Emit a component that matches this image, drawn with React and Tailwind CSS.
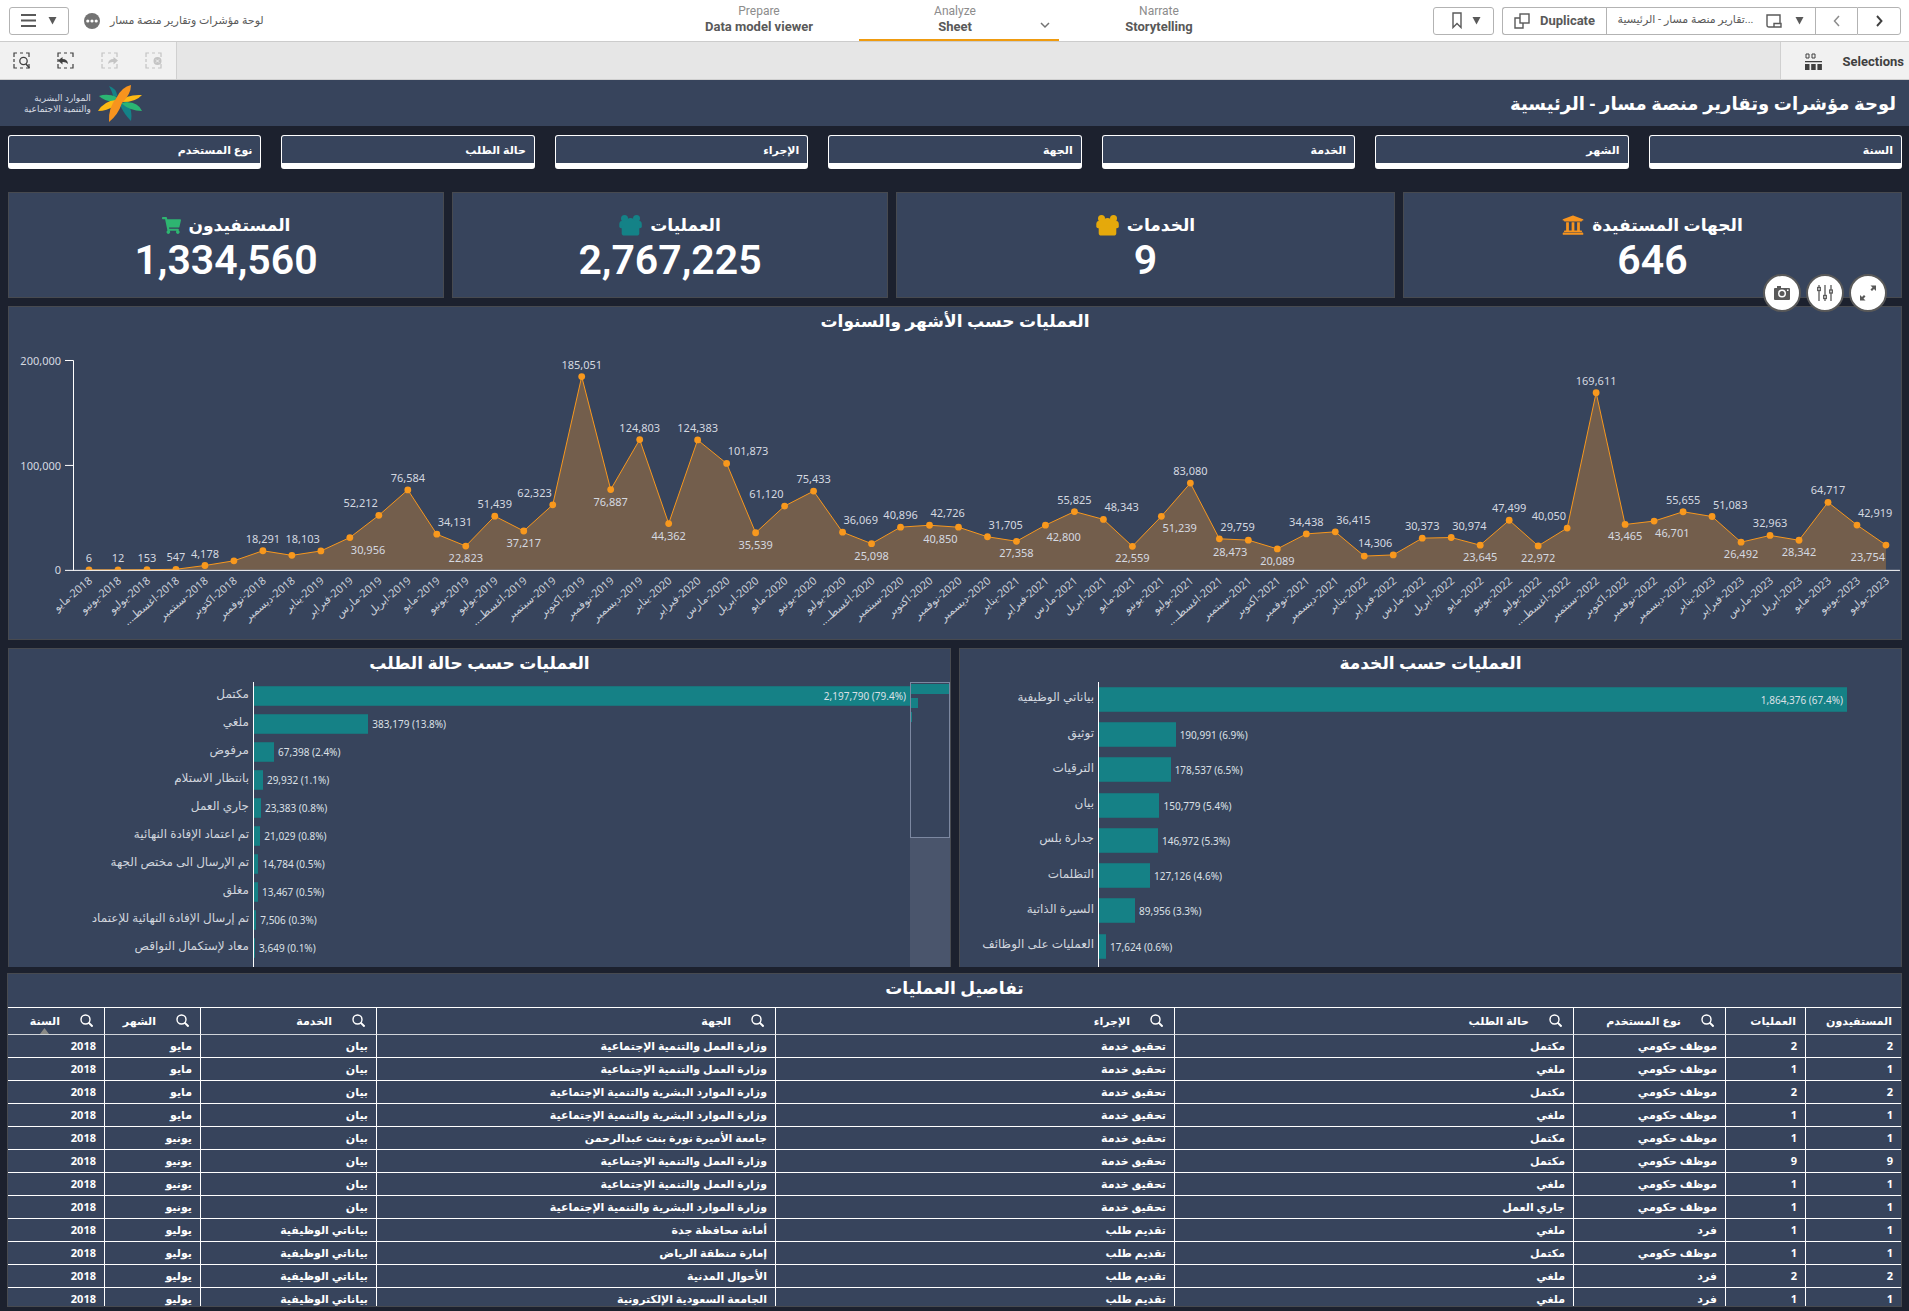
import React from "react";
import {
  FaShoppingCart,
  FaUniversity,
} from "react-icons/fa";

const FILTERS = ["نوع المستخدم", "حالة الطلب", "الإجراء", "الجهة", "الخدمة", "الشهر", "السنة"];

const MONTHS = ["يناير", "فبراير", "مارس", "ابريل", "مايو", "يونيو", "يوليو", "اغسطـ...", "سبتمبر", "اكتوبر", "نوفمبر", "ديسمبر"];

// [value, label placement]: a/b = above/below, l/r = left/right of the point, "" = no label
const SERIES = [
  [6, "a"], [12, "a"], [153, "a"], [547, "a"], [4178, "a"], [8700, ""], [18291, "a"], [13900, ""],
  [18103, "al"], [30956, "br"], [52212, "al"], [76584, "a"], [34131, "ar"], [22823, "b"], [51439, "a"], [37217, "b"], [62323, "al"], [185051, "a"], [76887, "b"], [124803, "a"],
  [44362, "b"], [124383, "a"], [101873, "ar"], [35539, "b"], [61120, "al"], [75433, "a"], [36069, "ar"], [25098, "b"], [40896, "a"], [42726, "ar"], [40850, "bl"], [31705, "ar"],
  [27358, "b"], [42800, "br"], [55825, "a"], [48343, "ar"], [22559, "b"], [51239, "br"], [83080, "a"], [29759, "ar"], [28473, "bl"], [20089, "b"], [34438, "a"], [36415, "ar"],
  [13200, ""], [14306, "al"], [30373, "a"], [30974, "ar"], [23645, "b"], [47499, "a"], [22972, "b"], [40050, "al"], [169611, "a"], [43465, "b"], [46701, "br"], [55655, "a"],
  [51083, "ar"], [26492, "b"], [32963, "a"], [28342, "b"], [64717, "a"], [42919, "ar"], [23754, "bl"],
];

const STATUS = [
  ["مكتمل", 2197790, "79.4%"],
  ["ملغي", 383179, "13.8%"],
  ["مرفوض", 67398, "2.4%"],
  ["بانتظار الاستلام", 29932, "1.1%"],
  ["جاري العمل", 23383, "0.8%"],
  ["تم اعتماد الإفادة النهائية", 21029, "0.8%"],
  ["تم الإرسال الى مختص الجهة", 14784, "0.5%"],
  ["مغلق", 13467, "0.5%"],
  ["تم إرسال الإفادة النهائية للإعتماد", 7506, "0.3%"],
  ["معاد لإستكمال النواقص", 3649, "0.1%"],
];

const SERVICES = [
  ["بياناتي الوظيفية", 1864376, "67.4%"],
  ["توثيق", 190991, "6.9%"],
  ["الترقيات", 178537, "6.5%"],
  ["بيان", 150779, "5.4%"],
  ["جدارة بلس", 146972, "5.3%"],
  ["التظلمات", 127126, "4.6%"],
  ["السيرة الذاتية", 89956, "3.3%"],
  ["العمليات على الوظائف", 17624, "0.6%"],
];

const COLUMNS = [
  ["السنة", true, 97], ["الشهر", true, 96], ["الخدمة", true, 176], ["الجهة", true, 399], ["الإجراء", true, 399],
  ["حالة الطلب", true, 399], ["نوع المستخدم", true, 152], ["العمليات", false, 80], ["المستفيدون", false, 95],
];
const COLUMN_TOTAL = COLUMNS.reduce((sum, c) => sum + c[2], 0);

const LABOR = "وزارة العمل والتنمية الإجتماعية";
const HR = "وزارة الموارد البشرية والتنمية الإجتماعية";
const GOV = "موظف حكومي";
const RUN = "تحقيق خدمة";
const ASK = "تقديم طلب";
const MY = "بياناتي الوظيفية";
const ROWS = [
  ["2018", "مايو", "بيان", LABOR, RUN, "مكتمل", GOV, "2", "2"],
  ["2018", "مايو", "بيان", LABOR, RUN, "ملغي", GOV, "1", "1"],
  ["2018", "مايو", "بيان", HR, RUN, "مكتمل", GOV, "2", "2"],
  ["2018", "مايو", "بيان", HR, RUN, "ملغي", GOV, "1", "1"],
  ["2018", "يونيو", "بيان", "جامعة الأميرة نورة بنت عبدالرحمن", RUN, "مكتمل", GOV, "1", "1"],
  ["2018", "يونيو", "بيان", LABOR, RUN, "مكتمل", GOV, "9", "9"],
  ["2018", "يونيو", "بيان", LABOR, RUN, "ملغي", GOV, "1", "1"],
  ["2018", "يونيو", "بيان", HR, RUN, "جاري العمل", GOV, "1", "1"],
  ["2018", "يوليو", MY, "أمانة محافظة جدة", ASK, "ملغي", "فرد", "1", "1"],
  ["2018", "يوليو", MY, "إمارة منطقة الرياض", ASK, "مكتمل", GOV, "1", "1"],
  ["2018", "يوليو", MY, "الأحوال المدنية", ASK, "ملغي", "فرد", "2", "2"],
  ["2018", "يوليو", MY, "الجامعة السعودية الإلكترونية", ASK, "ملغي", "فرد", "1", "1"],
];

const PANEL = "border border-[#474a50] bg-[#37445c]";

function Caret() {
  return (
    <svg width="9" height="8" viewBox="0 0 9 8" aria-hidden="true">
      <path d="M0.500 0h8L4.500 7.500z" fill="#595959" />
    </svg>
  );
}

function GroupIcon({ className }) {
  return (
    <svg className={className} width="23" height="21" viewBox="0 0 23 21" fill="currentColor" aria-hidden="true">
      <circle cx="5.500" cy="3.500" r="3.500" />
      <circle cx="17.500" cy="3.500" r="3.500" />
      <circle cx="11.500" cy="7.500" r="4.600" />
      <path d="M2.500 6h18q2.300.3 2.300 3.500v2q0 1.800-2 1.800h-18.500q-2 0-2-1.800v-2q0-3.200 2.200-3.500z" />
      <path d="M3.500 10.500h16q.8 1 .8 3v4.500q0 2.600-2.600 2.600h-12.400q-2.600 0-2.600-2.600v-4.500q0-2 .8-3z" />
    </svg>
  );
}

function SelectionIcon({ kind, label, muted }) {
  const color = muted ? "text-[#c4c4c4]" : "text-[#404040]";
  return (
    <button type="button" aria-label={label} disabled={muted} className={`flex h-full w-11 items-center justify-center pr-[2px] ${color}`}>
      <svg width="17" height="17" viewBox="0 0 17 17" fill="none" stroke="currentColor">
        <path d="M1 5V1h3M7 1h3M13 1h3v4M1 7v3M1 12v4h3M7 16h3M13 16h3v-4" strokeWidth="1.200" />
        {kind === "search" && (
          <g>
            <circle cx="10.500" cy="9" r="3.700" strokeWidth="1.300" fill="#f1f1f1" />
            <path d="M13 12l3.500 4" strokeWidth="1.500" />
          </g>
        )}
        {kind === "back" && <path d="M1 8.500l4.500-3.500v2q5 0 5.500 5-2-2.200-5.500-2v2.500z" fill="currentColor" stroke="none" />}
        {kind === "forward" && <path d="M17 8.500l-4.500-3.500v2q-5 0-5.500 5 2-2.200 5.500-2v2.500z" fill="currentColor" stroke="none" />}
        {kind === "clear" && (
          <g>
            <circle cx="12.500" cy="9" r="4" fill="currentColor" stroke="none" />
            <path d="M11 7.500l3 3M14 7.500l-3 3" stroke="#f1f1f1" />
          </g>
        )}
      </svg>
    </button>
  );
}

function Toolbar() {
  const box = "flex h-7 items-center justify-center border border-[#b3b3b3] bg-white";
  return (
    <header className="grid h-[42px] grid-cols-[1fr_auto_1fr] items-center border-b border-[#ccc] bg-white pr-2 pl-[9px] text-xs text-[#595959]">
      <div className="flex items-center">
        <button type="button" aria-label="Navigation" className={`${box} w-[60px] gap-3 rounded-[3px]`}>
          <svg width="15" height="13" viewBox="0 0 15 13" aria-hidden="true">
            <path d="M0 1h15M0 6.500h15M0 12h15" stroke="#595959" strokeWidth="2" />
          </svg>
          <Caret />
        </button>
        <button type="button" aria-label="More" className="ml-[15px]">
          <svg width="16" height="16" viewBox="0 0 16 16">
            <circle cx="8" cy="8" r="8" fill="#737373" />
            <circle cx="3.800" cy="8" r="1.600" fill="#fff" />
            <circle cx="8" cy="8" r="1.600" fill="#fff" />
            <circle cx="12.200" cy="8" r="1.600" fill="#fff" />
          </svg>
        </button>
        <h1 dir="rtl" className="ml-[10px] text-[11px] leading-4 whitespace-nowrap">لوحة مؤشرات وتقارير منصة مسار</h1>
      </div>

      <nav className="flex h-[41px] pl-2 text-center leading-4">
        <a href="#prepare" className="w-[200px] pt-[3px]">
          <span className="block text-[#8c8c8c]">Prepare</span>
          <span className="block text-[13px] font-bold">Data model viewer</span>
        </a>
        <a href="#analyze" className="relative w-[200px] border-b-2 border-[#ef9b0f] pt-[3px] pr-2">
          <span className="block text-[#8c8c8c]">Analyze</span>
          <span className="block text-[13px] font-bold">Sheet</span>
          <svg className="absolute right-[9px] bottom-[10px]" width="10" height="7" viewBox="0 0 10 7" fill="none" aria-hidden="true">
            <path d="M1 1l4 4 4-4" stroke="#737373" strokeWidth="1.500" />
          </svg>
        </a>
        <a href="#narrate" className="w-[200px] pt-[3px]">
          <span className="block text-[#8c8c8c]">Narrate</span>
          <span className="block text-[13px] font-bold">Storytelling</span>
        </a>
      </nav>

      <div className="flex items-center justify-end">
        <button type="button" aria-label="Bookmarks" className={`${box} mr-2 w-[61px] gap-[10px] rounded-[3px] pl-[6px]`}>
          <svg width="10" height="17" viewBox="0 0 10 17" fill="none" aria-hidden="true">
            <path d="M1 1h8v14.500L5 11.500l-4 4z" stroke="#595959" strokeWidth="1.400" />
          </svg>
          <Caret />
        </button>
        <button type="button" className={`${box} w-[104px] gap-[10px] rounded-l-[3px] border-r-0 text-[13px] font-bold`}>
          <svg width="16" height="16" viewBox="0 0 16 16" fill="none" stroke="#595959" strokeWidth="1.400" aria-hidden="true">
            <rect x="6" y="1" width="9" height="9" />
            <path d="M6 5H1v10h8v-5" />
          </svg>
          Duplicate
        </button>
        <button type="button" className={`${box} w-[209px] gap-[13px] border-r-0`}>
          <span dir="rtl" className="text-[11px] whitespace-nowrap">...تقارير منصة مسار - الرئيسية</span>
          <svg width="16" height="14" viewBox="0 0 16 14" fill="none" stroke="#595959" strokeWidth="1.400" aria-hidden="true">
            <path d="M8 13H3q-2 0-2-2V1h13v8M8 13V9.500h7V13z" />
          </svg>
          <Caret />
        </button>
        <button type="button" aria-label="Previous sheet" className={`${box} w-[42px] border-r-0`}>
          <svg width="7" height="12" viewBox="0 0 7 12" fill="none" aria-hidden="true">
            <path d="M6 1L1.500 6 6 11" stroke="#8c8c8c" strokeWidth="1.500" />
          </svg>
        </button>
        <button type="button" aria-label="Next sheet" className={`${box} w-11 rounded-r-[3px]`}>
          <svg width="7" height="12" viewBox="0 0 7 12" fill="none" aria-hidden="true">
            <path d="M1 1l4.500 5L1 11" stroke="#404040" strokeWidth="1.900" />
          </svg>
        </button>
      </div>
    </header>
  );
}

function SelectionsBar() {
  return (
    <div className="flex h-[38px] items-stretch justify-between border-b border-[#d0d0d0] bg-[#e6e6e6]">
      <div className="flex border-r border-[#d0d0d0] bg-[#f1f1f1]">
        <SelectionIcon kind="search" label="Smart search" />
        <SelectionIcon kind="back" label="Step back" />
        <SelectionIcon kind="forward" label="Step forward" muted />
        <SelectionIcon kind="clear" label="Clear all selections" muted />
      </div>
      <button type="button" className="flex items-center gap-[21px] border-l border-[#d0d0d0] bg-[#f1f1f1] pt-[2px] pr-[5px] pl-6 text-[13px] font-bold text-[#404040]">
        <svg width="17" height="17" viewBox="0 0 17 17" aria-hidden="true">
          <path d="M1 1h3v4H1zM7 1h3v4H7z" fill="none" stroke="#404040" />
          <path d="M0 8h17v1.300H0zM0 11h4.500v6H0zM6.200 11h4.500v6H6.200zM12.400 11h4.500v6h-4.500z" fill="#404040" />
        </svg>
        Selections
      </button>
    </div>
  );
}

function Logo() {
  return (
    <div className="flex items-center gap-[7px]">
      <p dir="rtl" className="text-[9px] leading-[11px] text-[#d5dae2]">
        الموارد البشرية
        <br />
        والتنمية الاجتماعية
      </p>
      <svg width="44" height="37" viewBox="0 0 44 37" role="img" aria-label="logo">
        <path d="M11 1q7 2 8.500 10l-4 1Q14 6 11 1z" fill="#148287" />
        <path d="M22 20l7-4q6 10 4 20-7-7-11-16z" fill="#148287" />
        <path d="M1 11q8-3 18 1l-3 5Q6 16 1 11z" fill="#2bb573" />
        <path d="M23 18q16-3 21 8-12 0-21-8z" fill="#2bb573" />
        <path d="M21 17q8-8 23-7-7 8-23 7z" fill="#fdb913" />
        <path d="M0 26q6-10 18-11l-2 6Q9 26 0 26z" fill="#fdb913" />
        <path d="M33 0q0 9-9 18-4 12-13 19-1-14 8-25Q24 2 33 0z" fill="#f7941e" />
      </svg>
    </div>
  );
}

function Kpi({ title, value, icon }) {
  return (
    <section className={`${PANEL} flex h-[106px] flex-col items-center pt-5`}>
      <h3 className="flex h-6 items-center gap-2 text-[17px] leading-6 font-bold">
        {icon}
        <span>{title}</span>
      </h3>
      <p className="font-['Roboto',sans-serif] text-[41px] leading-[46px] font-semibold">{value}</p>
    </section>
  );
}

function PanelTitle({ children }) {
  return <h2 dir="rtl" className="h-[33px] pt-[2px] text-center text-[17px] leading-6 font-bold">{children}</h2>;
}

function LineChart() {
  const px = (i) => 89 + i * 29;
  const py = (v) => 570 - (v * 209) / 200000;
  const points = SERIES.map(([v], i) => `${px(i)},${py(v)}`).join(" ");
  return (
    <svg className="block h-auto w-full" viewBox="9 340 1893 299" role="img" aria-label="العمليات حسب الأشهر والسنوات">
      <polygon points={`89,570 ${points} ${px(62)},570`} fill="#735e4c" />
      <polyline points={points} fill="none" stroke="#f8981d" strokeWidth="1" />
      <clipPath id="plot"><rect x="70" y="340" width="1832" height="230" /></clipPath>
      <g clipPath="url(#plot)" fill="#f8981d">
        {SERIES.map(([v], i) => <circle key={i} cx={px(i)} cy={py(v)} r="3.400" />)}
      </g>
      <path d="M65 360.500h8.500V570.500M65 465.500h8M65 570.500H1901" fill="none" stroke="#fff" />
      <g fill="#d5d9e0" fontSize="11">
        <text x="61" y="365" textAnchor="end">200,000</text>
        <text x="61" y="470" textAnchor="end">100,000</text>
        <text x="61" y="574" textAnchor="end">0</text>
        {SERIES.map(([v, place], i) => {
          if (!place) return null;
          const anchor = place.endsWith("l") ? "end" : place.endsWith("r") ? "start" : "middle";
          const dx = anchor === "end" ? -1 : anchor === "start" ? 1 : 0;
          const dy = place[0] === "a" ? -8 : 16;
          return <text key={i} x={px(i) + dx} y={py(v) + dy} textAnchor={anchor}>{v.toLocaleString("en-US")}</text>;
        })}
      </g>
      <g fill="#c9ced8" fontSize="11" direction="rtl">
        {SERIES.map((_, i) => {
          const m = i + 4;
          return (
            <text key={i} transform={`translate(${px(i) + 4} 582) rotate(-40)`} textAnchor="start">
              {`${2018 + Math.floor(m / 12)}-${MONTHS[m % 12]}`}
            </text>
          );
        })}
      </g>
    </svg>
  );
}

function BarRows({ data, labelClass, areaClass, rowClass, barClass }) {
  const max = data[0][1];
  return (
    <>
      <ul className={`${labelClass} flex flex-none flex-col pr-1 text-right text-xs text-[#d0d5dd]`} dir="ltr">
        {data.map(([name]) => (
          <li key={name} className={`${rowClass} flex items-center justify-end pb-1 whitespace-nowrap`}>{name}</li>
        ))}
      </ul>
      <ul className={`${areaClass} flex min-w-0 flex-1 flex-col border-l border-white text-[10px] text-[#dce0e6]`}>
        {data.map(([name, value, share], i) => {
          const text = `${value.toLocaleString("en-US")} (${share})`;
          return (
            <li key={name} className={`${rowClass} flex items-center gap-1 whitespace-nowrap`}>
              <div
                className={`${barClass} flex flex-none items-center justify-end border-y border-[#1b737b] bg-[#158186]`}
                style={{ width: `${(value / max) * 100}%` }}
              >
                {i === 0 && <span className="pt-[2px] pr-1">{text}</span>}
              </div>
              {i > 0 && <span className="pt-[2px]">{text}</span>}
            </li>
          );
        })}
      </ul>
    </>
  );
}

function StatusChart() {
  return (
    <section className={`${PANEL} h-[319px] overflow-hidden border-b-0`}>
      <PanelTitle>العمليات حسب حالة الطلب</PanelTitle>
      <div className="flex h-[285px]">
        <BarRows data={STATUS} labelClass="w-[244px]" areaClass="" rowClass="h-7" barClass="h-5" />
        <div className="h-full w-10 flex-none bg-[#4a556c]">
          <div className="flex h-[156px] flex-col gap-1 border border-[#7c88a1] bg-[#37445c] pt-px">
            <div className="h-[10px] w-full bg-[#158186]" />
            <div className="h-[10px] w-[7px] bg-[#158186]" />
            <div className="h-[10px] w-px bg-[#158186]" />
          </div>
        </div>
      </div>
    </section>
  );
}

function ServiceChart() {
  return (
    <section className={`${PANEL} h-[319px] overflow-hidden border-b-0`}>
      <PanelTitle>العمليات حسب الخدمة</PanelTitle>
      <div className="flex h-[285px]">
        <BarRows data={SERVICES} labelClass="w-[138px] pb-[3px]" areaClass="pr-[54px] pb-[3px]" rowClass="flex-1" barClass="h-[25px]" />
      </div>
    </section>
  );
}

function DetailsTable() {
  return (
    <section className={`${PANEL} h-[334px] overflow-hidden`}>
      <PanelTitle>تفاصيل العمليات</PanelTitle>
      <table className="w-full table-fixed border-separate border-spacing-0 text-[11px]">
        <colgroup>
          {COLUMNS.map(([name, , w]) => <col key={name} style={{ width: `${(w / COLUMN_TOTAL) * 100}%` }} />)}
        </colgroup>
        <thead>
          <tr>
            {COLUMNS.map(([name, search], i) => (
              <th
                key={name}
                scope="col"
                className={`relative h-7 border-y border-t-white border-b-[#d0d4da] p-0 font-bold ${i < 8 ? "border-r border-r-white" : ""} ${search ? "pr-[11px]" : "pr-[9px]"}`}
              >
                <div className="flex items-center justify-end gap-5 leading-4 whitespace-nowrap">
                  <span>{name}</span>
                  {search && (
                    <button type="button" aria-label={`بحث ${name}`}>
                      <svg width="13" height="13" viewBox="0 0 13 13" fill="none" stroke="#fff" aria-hidden="true">
                        <circle cx="5.500" cy="5.500" r="4.500" strokeWidth="1.400" />
                        <path d="M8.600 8.600l4 4" strokeWidth="2" />
                      </svg>
                    </button>
                  )}
                </div>
                {i === 0 && (
                  <svg className="absolute bottom-0 left-8" width="9" height="6" viewBox="0 0 9 6" aria-hidden="true">
                    <path d="M4.500 0L9 6H0z" fill="#8a8a86" />
                  </svg>
                )}
              </th>
            ))}
          </tr>
        </thead>
        <tbody>
          {ROWS.map((row, r) => (
            <tr key={r}>
              {row.map((cell, c) => (
                <td key={c} className={`h-[23px] border-b border-white p-0 pr-2 text-right leading-[18px] font-bold whitespace-nowrap ${c < 8 ? "border-r" : ""}`}>
                  {cell}
                </td>
              ))}
            </tr>
          ))}
        </tbody>
      </table>
    </section>
  );
}

function ChartTools() {
  const round = "flex size-[38px] items-center justify-center rounded-full border-2 border-[#595959] bg-white";
  return (
    <div className="absolute -top-[33px] right-[14px] flex gap-[5px]">
      <button type="button" aria-label="Snapshot" className={round}>
        <svg width="16" height="14" viewBox="0 0 16 14" aria-hidden="true">
          <path d="M1 2h2V0h4v2h8q1 0 1 1v10q0 1-1 1H1q-1 0-1-1V3q0-1 1-1z" fill="#595959" />
          <circle cx="8" cy="7.500" r="4" fill="#fff" />
          <circle cx="8" cy="7.500" r="2.500" fill="#595959" />
          <path d="M13 3.500h1.500V5H13z" fill="#fff" />
        </svg>
      </button>
      <button type="button" aria-label="Exploration menu" className={round}>
        <svg width="16" height="16" viewBox="0 0 16 16" fill="#fff" stroke="#595959" strokeWidth="1.300" aria-hidden="true">
          <path d="M2 0v16M8 0v16M14 0v16" />
          <rect x="0.700" y="2.500" width="2.600" height="3" />
          <rect x="6.700" y="10.500" width="2.600" height="3" />
          <rect x="12.700" y="5" width="2.600" height="3" />
        </svg>
      </button>
      <button type="button" aria-label="Full screen" className={round}>
        <svg width="16" height="16" viewBox="0 0 16 16" fill="#595959" aria-hidden="true">
          <path d="M10.500 0.500H16V6l-2-2-2 2-1.500-1.500 2-2zM5.500 15.500H0V10l2 2 2-2 1.500 1.500-2 2z" />
        </svg>
      </button>
    </div>
  );
}

export default function App() {
  return (
    <div className="min-h-screen bg-[#1c212e] font-['Noto_Sans','DejaVu_Sans',sans-serif] text-white">
      <div className="font-['Roboto','DejaVu_Sans',sans-serif]">
        <Toolbar />
        <SelectionsBar />
      </div>

      <div className="flex h-[46px] items-center justify-between bg-[#37445c] pr-[13px] pl-6">
        <Logo />
        <h2 dir="rtl" className="text-[18px] leading-7 font-bold">لوحة مؤشرات وتقارير منصة مسار - الرئيسية</h2>
      </div>

      <main className="pt-[9px] pr-[6px] pb-1 pl-[7px]">
        <div className="mx-px grid grid-cols-7 gap-5">
          {FILTERS.map((name) => (
            <button key={name} type="button" dir="rtl" className="h-[34px] rounded-[3px] border border-b-[6px] border-white bg-[#37445c] px-2 pt-[2px] text-start text-[11px] font-bold">
              {name}
            </button>
          ))}
        </div>

        <div className="mx-px mt-[23px] grid grid-cols-[436fr_436fr_499fr_499fr] gap-2">
          <Kpi title="المستفيدون" value="1,334,560" icon={<FaShoppingCart className="size-[19px] text-[#2eb571]" />} />
          <Kpi title="العمليات" value="2,767,225" icon={<GroupIcon className="text-[#148287]" />} />
          <Kpi title="الخدمات" value="9" icon={<GroupIcon className="text-[#e5a90b]" />} />
          <Kpi title="الجهات المستفيدة" value="646" icon={<FaUniversity className="size-[22px] text-[#f7941e]" />} />
        </div>

        <section className={`${PANEL} relative mx-px mt-2`}>
          <PanelTitle>العمليات حسب الأشهر والسنوات</PanelTitle>
          <LineChart />
          <ChartTools />
        </section>

        <div className="mx-px mt-2 grid grid-cols-2 gap-2">
          <StatusChart />
          <ServiceChart />
        </div>

        <div className="mt-[6px] mr-px">
          <DetailsTable />
        </div>
      </main>
    </div>
  );
}
